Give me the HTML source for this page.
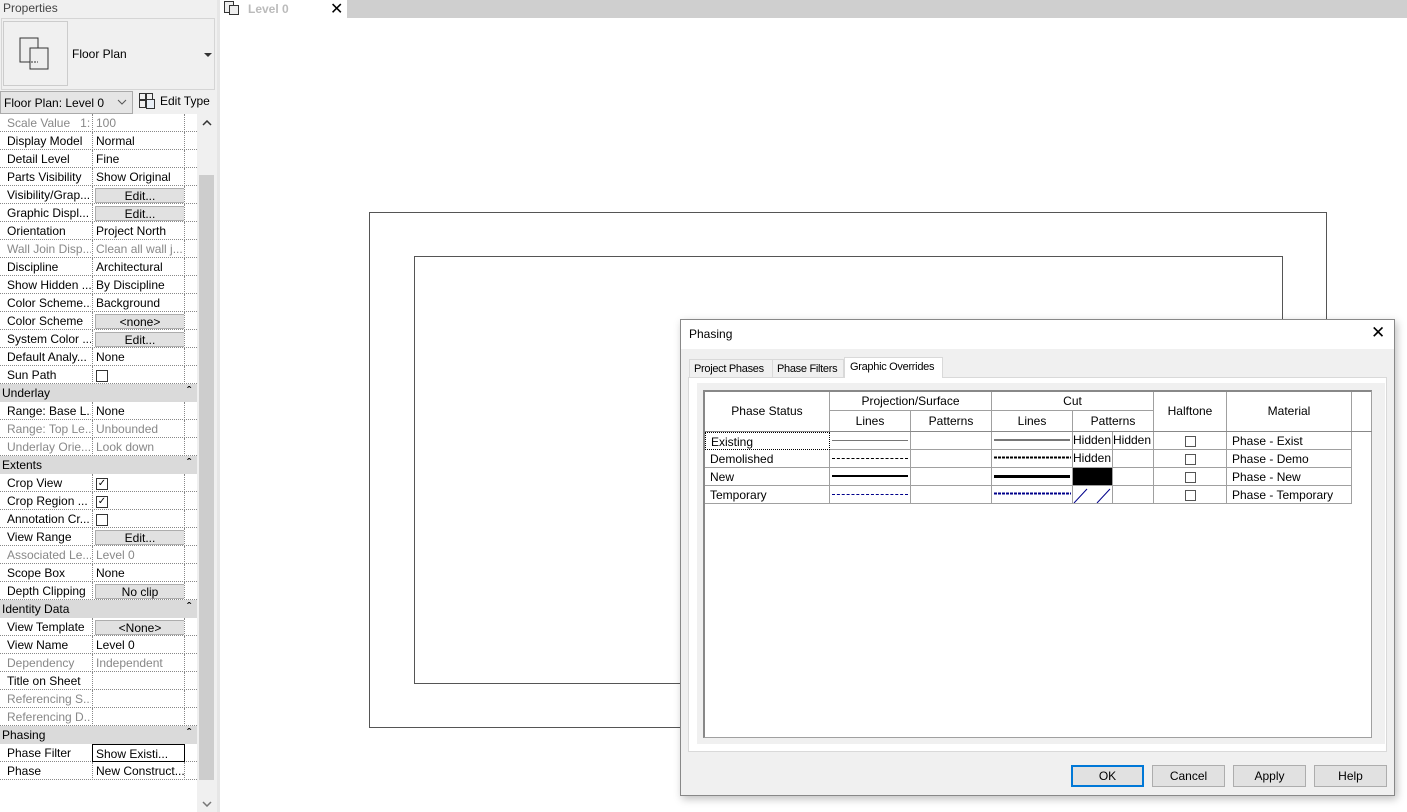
<!DOCTYPE html>
<html><head><meta charset="utf-8"><style>
*{box-sizing:border-box;margin:0;padding:0}
body{width:1407px;height:812px;position:relative;overflow:hidden;background:#fff;font-family:"Liberation Sans",sans-serif;font-size:12px;color:#000}
.a{position:absolute}
.row{position:absolute;left:0;width:197px;height:18px;border-bottom:1px dotted #888}
.row .l{position:absolute;left:7px;top:2px;width:84px;white-space:nowrap;overflow:hidden}
.row .v{position:absolute;left:92px;top:0;width:93px;height:18px;border-left:1px dotted #888;border-right:1px dotted #888;padding:2px 3px;white-space:nowrap;overflow:hidden}
.g{color:#888}
.hd{position:absolute;left:0;width:197px;height:18px;background:#dadada;padding:2px 2px}
.hd:after{content:"\02C6";position:absolute;right:6px;top:0px;font-size:12px;font-weight:bold}
.btn{position:absolute;left:2px;top:2px;width:90px;height:15px;background:#e1e1e1;border:1px solid #adadad;text-align:center;font-size:12px;line-height:14px}
.cb{display:inline-block;width:12px;height:12px;border:1px solid #333;vertical-align:middle;margin-top:1px;position:relative}
.tc{position:absolute;border-right:1px solid #a0a0a0;border-bottom:1px solid #a0a0a0;font-size:12px;white-space:nowrap;overflow:hidden}
.dbtn{position:absolute;top:765px;width:73px;height:22px;background:#e1e1e1;border:1px solid #adadad;text-align:center;line-height:20px}
.tab{position:absolute;white-space:nowrap;font-size:11px;letter-spacing:-0.3px}
</style></head><body>
<div class="a" style="left:0;top:0;width:217px;height:812px;background:#f0f0f0"></div>
<div class="a" style="left:3px;top:1px;color:#444">Properties</div>
<div class="a" style="left:1px;top:18px;width:214px;height:72px;border:1px solid #d5d5d5;background:#f0f0f0"></div>
<div class="a" style="left:3px;top:21px;width:65px;height:65px;border:1px solid #ccc"></div>
<svg class="a" style="left:19px;top:37px" width="34" height="34"><rect x="1" y="1" width="18" height="24" fill="#eee" stroke="#333"/><rect x="11" y="11" width="18" height="21" fill="#eee" stroke="#333"/><path d="M11 11v14h8" fill="none" stroke="#333" stroke-dasharray="2 1"/></svg>
<div class="a" style="left:72px;top:47px">Floor Plan</div>
<div class="a" style="left:204px;top:53px;width:0;height:0;border-left:4px solid transparent;border-right:4px solid transparent;border-top:4px solid #333"></div>
<div class="a" style="left:0;top:91px;width:133px;height:23px;background:#e5e5e5;border:1px solid #aaa;padding:4px 3px">Floor Plan: Level 0</div>
<svg class="a" style="left:117px;top:99px" width="10" height="6"><path d="M1 1l4 4 4-4" fill="none" stroke="#555"/></svg>
<svg class="a" style="left:139px;top:93px" width="17" height="16"><rect x="0.5" y="0.5" width="6" height="6" fill="none" stroke="#333"/><rect x="7.5" y="0.5" width="6" height="6" fill="none" stroke="#333"/><rect x="0.5" y="7.5" width="6" height="7" fill="none" stroke="#333"/><rect x="7.5" y="6.5" width="8" height="9" fill="#e8eef5" stroke="#333"/></svg>
<div class="a" style="left:160px;top:94px">Edit Type</div>
<div class="a" style="left:0;top:114px;width:197px;height:698px;background:#fff"></div>
<div class="a" style="left:197px;top:114px;width:20px;height:698px;background:#f0f0f0"></div>
<div class="a" style="left:199px;top:175px;width:15px;height:605px;background:#cdcdcd"></div>
<svg class="a" style="left:202px;top:120px" width="10" height="6"><path d="M1 5l4-4 4 4" fill="none" stroke="#333" stroke-width="1.5"/></svg>
<svg class="a" style="left:202px;top:801px" width="10" height="6"><path d="M1 1l4 4 4-4" fill="none" stroke="#777" stroke-width="1.5"/></svg>
<div class="a" style="left:217px;top:0;width:3px;height:812px;background:#e6e6e6"></div>

<div class="row" style="top:114px"><div class="l g">Scale Value &nbsp;&nbsp;1:</div><div class="v g">100</div></div>
<div class="row" style="top:132px"><div class="l">Display Model</div><div class="v">Normal</div></div>
<div class="row" style="top:150px"><div class="l">Detail Level</div><div class="v">Fine</div></div>
<div class="row" style="top:168px"><div class="l">Parts Visibility</div><div class="v">Show Original</div></div>
<div class="row" style="top:186px"><div class="l">Visibility/Grap...</div><div class="v"><div class="btn">Edit...</div></div></div>
<div class="row" style="top:204px"><div class="l">Graphic Displ...</div><div class="v"><div class="btn">Edit...</div></div></div>
<div class="row" style="top:222px"><div class="l">Orientation</div><div class="v">Project North</div></div>
<div class="row" style="top:240px"><div class="l g">Wall Join Disp...</div><div class="v g">Clean all wall j...</div></div>
<div class="row" style="top:258px"><div class="l">Discipline</div><div class="v">Architectural</div></div>
<div class="row" style="top:276px"><div class="l">Show Hidden ...</div><div class="v">By Discipline</div></div>
<div class="row" style="top:294px"><div class="l">Color Scheme...</div><div class="v">Background</div></div>
<div class="row" style="top:312px"><div class="l">Color Scheme</div><div class="v"><div class="btn">&lt;none&gt;</div></div></div>
<div class="row" style="top:330px"><div class="l">System Color ...</div><div class="v"><div class="btn">Edit...</div></div></div>
<div class="row" style="top:348px"><div class="l">Default Analy...</div><div class="v">None</div></div>
<div class="row" style="top:366px"><div class="l">Sun Path</div><div class="v"><span class="cb"></span></div></div>
<div class="hd" style="top:384px">Underlay</div>
<div class="row" style="top:402px"><div class="l">Range: Base L...</div><div class="v">None</div></div>
<div class="row" style="top:420px"><div class="l g">Range: Top Le...</div><div class="v g">Unbounded</div></div>
<div class="row" style="top:438px"><div class="l g">Underlay Orie...</div><div class="v g">Look down</div></div>
<div class="hd" style="top:456px">Extents</div>
<div class="row" style="top:474px"><div class="l">Crop View</div><div class="v"><span class="cb" style="font-size:10px;line-height:10px;text-align:center">&#10003;</span></div></div>
<div class="row" style="top:492px"><div class="l">Crop Region ...</div><div class="v"><span class="cb" style="font-size:10px;line-height:10px;text-align:center">&#10003;</span></div></div>
<div class="row" style="top:510px"><div class="l">Annotation Cr...</div><div class="v"><span class="cb"></span></div></div>
<div class="row" style="top:528px"><div class="l">View Range</div><div class="v"><div class="btn">Edit...</div></div></div>
<div class="row" style="top:546px"><div class="l g">Associated Le...</div><div class="v g">Level 0</div></div>
<div class="row" style="top:564px"><div class="l">Scope Box</div><div class="v">None</div></div>
<div class="row" style="top:582px"><div class="l">Depth Clipping</div><div class="v"><div class="btn">No clip</div></div></div>
<div class="hd" style="top:600px">Identity Data</div>
<div class="row" style="top:618px"><div class="l">View Template</div><div class="v"><div class="btn">&lt;None&gt;</div></div></div>
<div class="row" style="top:636px"><div class="l">View Name</div><div class="v">Level 0</div></div>
<div class="row" style="top:654px"><div class="l g">Dependency</div><div class="v g">Independent</div></div>
<div class="row" style="top:672px"><div class="l">Title on Sheet</div><div class="v"></div></div>
<div class="row" style="top:690px"><div class="l g">Referencing S...</div><div class="v"></div></div>
<div class="row" style="top:708px"><div class="l g">Referencing D...</div><div class="v"></div></div>
<div class="hd" style="top:726px">Phasing</div>
<div class="row" style="top:744px"><div class="l">Phase Filter</div><div class="v" style="border:1px solid #000">Show Existi...</div></div>
<div class="row" style="top:762px"><div class="l">Phase</div><div class="v">New Construct...</div></div>

<div class="a" style="left:347px;top:0;width:1060px;height:18px;background:#cfcfcf"></div>
<svg class="a" style="left:224px;top:1px" width="16" height="14"><rect x="0.5" y="0.5" width="9" height="11" fill="#eee" stroke="#333"/><rect x="5.5" y="4.5" width="9" height="9" fill="#eee" stroke="#333"/></svg>
<div class="a" style="left:248px;top:2px;color:#bbb;font-weight:bold">Level 0</div>
<div class="a" style="left:330px;top:-1px;font-size:16px">&#10005;</div>

<div class="a" style="left:369px;top:212px;width:958px;height:516px;border:1px solid #555"></div>
<div class="a" style="left:414px;top:256px;width:869px;height:428px;border:1px solid #555"></div>

<div class="a" style="left:680px;top:319px;width:715px;height:477px;background:#f0f0f0;border:1px solid #888;box-shadow:2px 3px 8px rgba(0,0,0,.25)"></div>
<div class="a" style="left:681px;top:320px;width:713px;height:29px;background:#fff"></div>
<div class="a" style="left:689px;top:327px">Phasing</div>
<div class="a" style="left:1371px;top:323px;font-size:17px">&#10005;</div>
<div class="a" style="left:688px;top:377px;width:699px;height:375px;background:#fff;border:1px solid #d9d9d9"></div>
<div class="tab" style="left:689px;top:359px;width:84px;height:19px;border:1px solid #d9d9d9;background:#f0f0f0;padding:3px 4px">Project Phases</div>
<div class="tab" style="left:772px;top:359px;width:72px;height:19px;border:1px solid #d9d9d9;background:#f0f0f0;padding:3px 4px">Phase Filters</div>
<div class="tab" style="left:844px;top:357px;width:99px;height:21px;border:1px solid #d9d9d9;border-bottom:none;background:#fff;padding:3px 5px">Graphic Overrides</div>
<div class="a" style="left:697px;top:383px;width:688px;height:361px;background:#f0f0f0"></div>
<div class="a" style="left:703px;top:390px;width:669px;height:348px;background:#fff;border:1px solid #a0a0a0;border-top:2px solid #888;border-left:2px solid #888"></div>

<div class="tc" style="left:705px;top:392px;width:125px;height:40px;text-align:center;line-height:38px">Phase Status</div>
<div class="tc" style="left:830px;top:392px;width:162px;height:19px;text-align:center;line-height:18px">Projection/Surface</div>
<div class="tc" style="left:992px;top:392px;width:162px;height:19px;text-align:center;line-height:18px">Cut</div>
<div class="tc" style="left:830px;top:411px;width:81px;height:21px;text-align:center;line-height:20px">Lines</div>
<div class="tc" style="left:911px;top:411px;width:81px;height:21px;text-align:center;line-height:20px">Patterns</div>
<div class="tc" style="left:992px;top:411px;width:81px;height:21px;text-align:center;line-height:20px">Lines</div>
<div class="tc" style="left:1073px;top:411px;width:81px;height:21px;text-align:center;line-height:20px">Patterns</div>
<div class="tc" style="left:1154px;top:392px;width:73px;height:40px;text-align:center;line-height:38px">Halftone</div>
<div class="tc" style="left:1227px;top:392px;width:125px;height:40px;text-align:center;line-height:38px">Material</div>
<div class="a" style="left:705px;top:431px;width:667px;height:1px;background:#888"></div>

<div class="tc" style="left:705px;top:432px;width:125px;height:18px;padding:2px 5px;border:1px dotted #000">Existing</div>
<div class="tc" style="left:705px;top:450px;width:125px;height:18px;padding:2px 5px">Demolished</div>
<div class="tc" style="left:705px;top:468px;width:125px;height:18px;padding:2px 5px">New</div>
<div class="tc" style="left:705px;top:486px;width:125px;height:18px;padding:2px 5px">Temporary</div>
<div class="tc" style="left:830px;top:432px;width:81px;height:18px"><div class="a" style="left:2px;top:8px;width:76px;border-top:1px solid #777"></div></div>
<div class="tc" style="left:830px;top:450px;width:81px;height:18px"><div class="a" style="left:2px;top:8px;width:76px;border-top:1px dashed #000"></div></div>
<div class="tc" style="left:830px;top:468px;width:81px;height:18px"><div class="a" style="left:2px;top:7px;width:76px;border-top:2px solid #000"></div></div>
<div class="tc" style="left:830px;top:486px;width:81px;height:18px"><div class="a" style="left:2px;top:8px;width:76px;border-top:1px dashed #00008b"></div></div>
<div class="tc" style="left:911px;top:432px;width:81px;height:18px"></div>
<div class="tc" style="left:911px;top:450px;width:81px;height:18px"></div>
<div class="tc" style="left:911px;top:468px;width:81px;height:18px"></div>
<div class="tc" style="left:911px;top:486px;width:81px;height:18px"></div>
<div class="tc" style="left:992px;top:432px;width:81px;height:18px"><div class="a" style="left:2px;top:7px;width:76px;border-top:2px solid #777"></div></div>
<div class="tc" style="left:992px;top:450px;width:81px;height:18px"><svg class="a" style="left:2px;top:6px" width="77" height="3"><line x1="0" y1="1.5" x2="77" y2="1.5" stroke="#000" stroke-width="2" stroke-dasharray="3 1"/></svg></div>
<div class="tc" style="left:992px;top:468px;width:81px;height:18px"><div class="a" style="left:2px;top:7px;width:76px;border-top:3px solid #000"></div></div>
<div class="tc" style="left:992px;top:486px;width:81px;height:18px"><svg class="a" style="left:2px;top:6px" width="77" height="3"><line x1="0" y1="1.5" x2="77" y2="1.5" stroke="#00008b" stroke-width="2" stroke-dasharray="3 1"/></svg></div>
<div class="tc" style="left:1073px;top:432px;width:40px;height:18px;line-height:17px">Hidden</div>
<div class="tc" style="left:1113px;top:432px;width:41px;height:18px;line-height:17px">Hidden</div>
<div class="tc" style="left:1073px;top:450px;width:40px;height:18px;line-height:17px">Hidden</div>
<div class="tc" style="left:1113px;top:450px;width:41px;height:18px"></div>
<div class="tc" style="left:1073px;top:468px;width:40px;height:18px;background:#000"></div>
<div class="tc" style="left:1113px;top:468px;width:41px;height:18px"></div>
<div class="tc" style="left:1073px;top:486px;width:40px;height:18px"><svg width="40" height="18"><path d="M1 17L14 3M24 17L37 3" stroke="#00008b"/></svg></div>
<div class="tc" style="left:1113px;top:486px;width:41px;height:18px"></div>
<div class="tc" style="left:1154px;top:432px;width:73px;height:18px;text-align:center"><span class="cb" style="width:11px;height:11px;border-color:#555;margin-top:3px"></span></div>
<div class="tc" style="left:1154px;top:450px;width:73px;height:18px;text-align:center"><span class="cb" style="width:11px;height:11px;border-color:#555;margin-top:3px"></span></div>
<div class="tc" style="left:1154px;top:468px;width:73px;height:18px;text-align:center"><span class="cb" style="width:11px;height:11px;border-color:#555;margin-top:3px"></span></div>
<div class="tc" style="left:1154px;top:486px;width:73px;height:18px;text-align:center"><span class="cb" style="width:11px;height:11px;border-color:#555;margin-top:3px"></span></div>
<div class="tc" style="left:1227px;top:432px;width:125px;height:18px;padding:2px 5px">Phase - Exist</div>
<div class="tc" style="left:1227px;top:450px;width:125px;height:18px;padding:2px 5px">Phase - Demo</div>
<div class="tc" style="left:1227px;top:468px;width:125px;height:18px;padding:2px 5px">Phase - New</div>
<div class="tc" style="left:1227px;top:486px;width:125px;height:18px;padding:2px 5px">Phase - Temporary</div>

<div class="dbtn" style="left:1071px;border:2px solid #0078d7;line-height:18px">OK</div>
<div class="dbtn" style="left:1152px">Cancel</div>
<div class="dbtn" style="left:1233px">Apply</div>
<div class="dbtn" style="left:1314px">Help</div>
</body></html>
